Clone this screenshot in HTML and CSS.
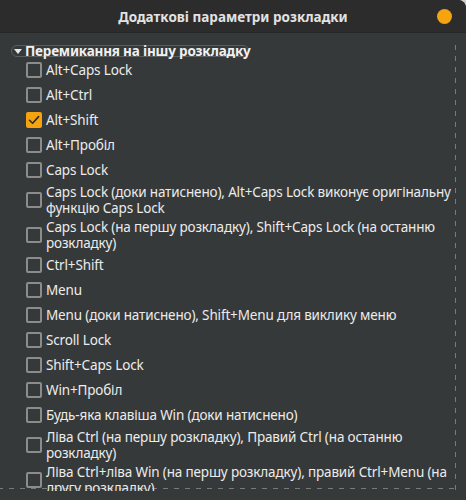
FILE: index.html
```html
<!DOCTYPE html>
<html lang="uk">
<head>
<meta charset="utf-8">
<title>Додаткові параметри розкладки</title>
<link rel="stylesheet" href="styles.css">
</head>
<body>
<div class="window">
  <header class="titlebar">
    <span class="title">Додаткові параметри розкладки</span>
    <span class="close" aria-label="Закрити"></span>
  </header>
  <main class="content">
    <div class="scroller">
      <div class="expander">
        <span class="arrow"></span>
        <span class="expander-label">Перемикання на іншу розкладку</span>
      </div>
      <ul class="options">
        <li class="option"><span class="check"></span><span class="label">Alt+Caps Lock</span></li>
        <li class="option"><span class="check"></span><span class="label">Alt+Ctrl</span></li>
        <li class="option"><span class="check checked"><svg viewBox="0 0 16 16" width="16" height="16"><path d="M3.5 8.3 L6.6 11.3 L12.6 4.6" fill="none" stroke="#2d2d2d" stroke-width="1.6" stroke-linecap="round" stroke-linejoin="round"/></svg></span><span class="label">Alt+Shift</span></li>
        <li class="option"><span class="check"></span><span class="label">Alt+Пробіл</span></li>
        <li class="option"><span class="check"></span><span class="label">Caps Lock</span></li>
        <li class="option"><span class="check"></span><span class="label">Caps Lock (доки натиснено), Alt+Caps Lock виконує оригінальну<br>функцію Caps Lock</span></li>
        <li class="option"><span class="check"></span><span class="label">Caps Lock (на першу розкладку), Shift+Caps Lock (на останню<br>розкладку)</span></li>
        <li class="option"><span class="check"></span><span class="label">Ctrl+Shift</span></li>
        <li class="option"><span class="check"></span><span class="label">Menu</span></li>
        <li class="option"><span class="check"></span><span class="label">Menu (доки натиснено), Shift+Menu для виклику меню</span></li>
        <li class="option"><span class="check"></span><span class="label">Scroll Lock</span></li>
        <li class="option"><span class="check"></span><span class="label">Shift+Caps Lock</span></li>
        <li class="option"><span class="check"></span><span class="label">Win+Пробіл</span></li>
        <li class="option"><span class="check"></span><span class="label">Будь-яка клавіша Win (доки натиснено)</span></li>
        <li class="option"><span class="check"></span><span class="label">Ліва Ctrl (на першу розкладку), Правий Ctrl (на останню<br>розкладку)</span></li>
        <li class="option"><span class="check"></span><span class="label">Ліва Ctrl+ліва Win (на першу розкладку), правий Ctrl+Menu (на<br>другу розкладку)</span></li>
      </ul>
    </div>
  </main>
</div>
</body>
</html>
```

FILE: styles.css
```css
html, body {
  margin: 0;
  padding: 0;
  background: #cfcfcf;
}

body {
  font-family: "Noto Sans", "DejaVu Sans", sans-serif;
  width: 466px;
  height: 500px;
  overflow: hidden;
}

.window {
  width: 466px;
  height: 500px;
  background: #363939;
  border-top-right-radius: 8px;
  overflow: hidden;
  display: flex;
  flex-direction: column;
}

.titlebar {
  height: 33px;
  flex: 0 0 33px;
  box-sizing: border-box;
  background: #2c2c2c;
  border-bottom: 1px solid #262626;
  display: flex;
  align-items: center;
  justify-content: center;
  position: relative;
}

.title {
  color: #e2e2e2;
  font-weight: bold;
  font-size: 13.5px;
  line-height: 16px;
  padding-top: 1px;
}

.close {
  position: absolute;
  right: 14px;
  top: 9px;
  width: 15px;
  height: 15px;
  border-radius: 50%;
  background: #f5a30f;
}

.content {
  flex: 1;
  padding-top: 9px;
}

.scroller {
  width: 456px;
  height: 449px;
  overflow: hidden;
  background-image:
    linear-gradient(to bottom, #7a7a7a 50%, transparent 50%),
    linear-gradient(to right, #7a7a7a 50%, transparent 50%);
  background-size: 1px 11px, 11px 1px;
  background-repeat: repeat-y, repeat-x;
  background-position: right 0 top 3px, left 9px bottom 2px;
}

.expander {
  display: flex;
  align-items: center;
  box-sizing: border-box;
  height: 12px;
  width: 238px;
  margin: 3px 0 0 11px;
  border: 1px solid #5e5e5e;
  border-radius: 6px;
}

.arrow {
  width: 0;
  height: 0;
  margin-left: 2px;
  margin-right: 3px;
  border-left: 4px solid transparent;
  border-right: 4px solid transparent;
  border-top: 5px solid #e8e8e8;
}

.expander-label {
  color: #f0f0f0;
  font-weight: bold;
  font-size: 13.5px;
  letter-spacing: -0.2px;
  line-height: 12px;
  white-space: nowrap;
}

.options {
  list-style: none;
  margin: 2px 0 0 0;
  padding: 0 0 0 26px;
  display: flex;
  flex-direction: column;
  gap: 3px;
}

.option {
  display: flex;
  align-items: center;
  min-height: 22px;
  gap: 4px;
}

.check {
  flex: 0 0 auto;
  box-sizing: border-box;
  width: 16px;
  height: 16px;
  border: 2px solid #8c8c8c;
  border-radius: 2px;
  display: flex;
  align-items: center;
  justify-content: center;
}

.check.checked {
  background: #f5a30f;
  border-color: #f5a30f;
}

.check svg {
  display: block;
  flex: 0 0 auto;
}

.label {
  color: #ececec;
  font-size: 13.5px;
  letter-spacing: -0.15px;
  line-height: 16px;
  white-space: nowrap;
}
```
